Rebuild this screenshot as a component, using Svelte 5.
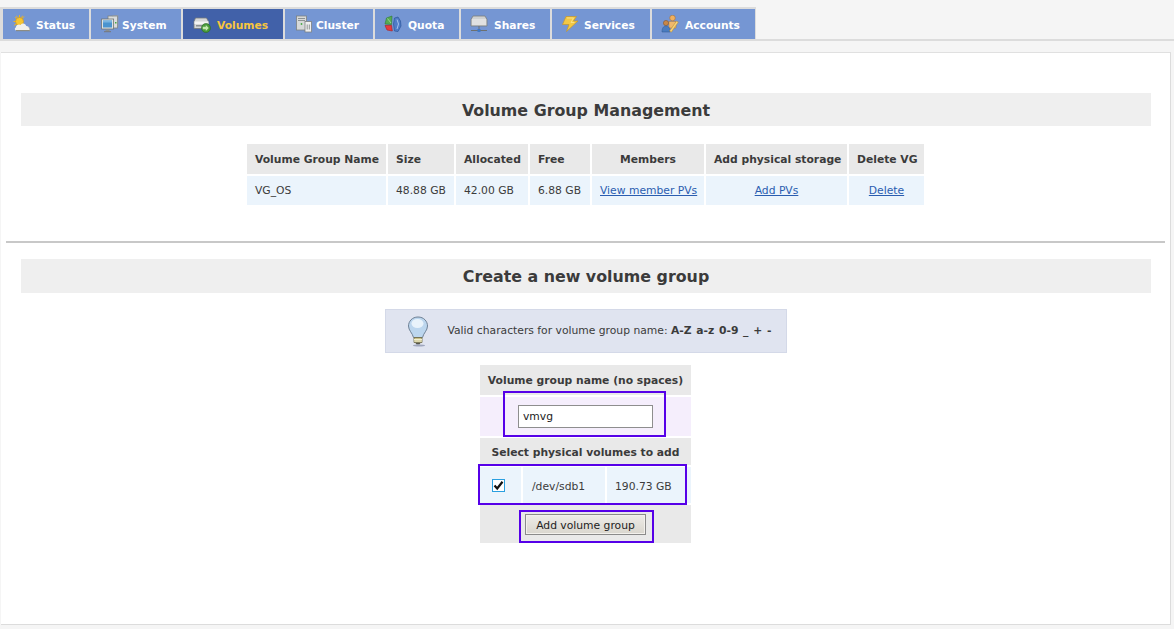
<script>
  const tabs = [
    { label: 'Status', icon: 'status' },
    { label: 'System', icon: 'system' },
    { label: 'Volumes', icon: 'volumes', active: true },
    { label: 'Cluster', icon: 'cluster' },
    { label: 'Quota', icon: 'quota' },
    { label: 'Shares', icon: 'shares' },
    { label: 'Services', icon: 'services' },
    { label: 'Accounts', icon: 'accounts' }
  ];
  const heads = ['Volume Group Name', 'Size', 'Allocated', 'Free', 'Members', 'Add physical storage', 'Delete VG'];
</script>

{#snippet icon(name)}
  <svg class="ico" viewBox="0 0 18 18" aria-hidden="true">
    {#if name === 'status'}
      <path d="M6.500 0v2.500M.5 6.500H3M2 2l1.800 1.800M11 1.500 9.500 3.300M1 10.500l2-1.300M9.500 0.800l-.8 2M3.500.8l.8 2" stroke="#eeb51f" stroke-width="1" />
      <circle cx="6.500" cy="6.500" r="4" fill="#f5c531" stroke="#d59a18" stroke-width=".7" />
      <path d="M3.500 15.500c-1.800 0-2.300-2.500-.6-3 .1-2.600 3-4 4.700-2.500.9-2.300 5.200-2 5.600 1 2.400-.3 4.400 2.800 3.600 4.500z" fill="#f1f0ea" />
      <path d="M3 15.600h14" stroke="#8c8c84" stroke-width="1.200" />
      <path d="M15.800 12.500c1 .8 1.200 2 .8 3" stroke="#a5a59c" fill="none" stroke-width=".8" />
    {:else if name === 'system'}
      <rect x="7" y="1" width="9.500" height="12" fill="#d9dcdc" stroke="#7e8383" stroke-width=".8" />
      <path d="M11 1 13 .5h4v11" fill="none" stroke="#9a9e9e" stroke-width=".6" />
      <rect x="14" y="7" width="1.500" height="1.500" fill="#49a846" />
      <rect x=".6" y="4" width="12" height="10" fill="#dfe3e3" stroke="#6e7474" stroke-width=".8" />
      <rect x="2" y="5.500" width="9" height="7" fill="#4a94cf" />
      <path d="M2 5.500h9v2H2z" fill="#79b4e0" />
      <path d="M4.500 14.500h4V16h-4z" fill="#8a8f8f" />
      <path d="M3 16.700h7" stroke="#777" />
    {:else if name === 'volumes'}
      <path d="M2.500 3h11l2 3.500v7H1v-7z" fill="#d5d7d7" stroke="#74797b" stroke-width=".8" />
      <rect x="1.500" y="6.500" width="14" height="2.500" fill="#f4f4f4" />
      <rect x="3" y="10" width="8" height="1.500" fill="#8c9092" />
      <circle cx="13" cy="13" r="4.500" fill="#4a9a3b" stroke="#2a6a25" stroke-width=".6" />
      <path d="M9.800 11.800h3V10l3 3-3 3v-1.800h-3z" fill="#c5eab0" />
    {:else if name === 'cluster'}
      <rect x="1.500" y="1" width="10" height="14" fill="#d7d9d9" stroke="#7d8282" stroke-width=".8" />
      <path d="M3 3.500h7M3 5.500h7" stroke="#8d9292" />
      <circle cx="6.500" cy="9" r=".9" fill="#49a846" />
      <rect x="10" y="6.500" width="6.500" height="10.500" fill="#f0f0f0" stroke="#7d8282" stroke-width=".8" />
      <path d="M12.200 9.500v5M14.300 9.500v5" stroke="#8d9292" />
    {:else if name === 'quota'}
      <path d="M8 1 2.500 3 1 9 7.500 9.500z" fill="#57ab52" stroke="#2f7a33" stroke-width=".6" />
      <path d="M3.500 3.500 7 8" stroke="#a9dba3" stroke-width=".8" />
      <path d="M1 10.500l6.500-.2.8 5.700-5.300-1z" fill="#e63b3e" stroke="#a81f22" stroke-width=".6" />
      <path d="M10.500 3 14 2l2.500 4 .5 5-3 5.500-3.500-.5-1-7z" fill="#4f7cc8" stroke="#244d91" stroke-width=".6" />
      <path d="M13 4.500 14.500 9 13 14" stroke="#a5c2ed" fill="none" />
    {:else if name === 'shares'}
      <path d="M3 1h12l2 3.500V11H1V4.500z" fill="#cfd1d1" stroke="#7a7e7e" stroke-width=".8" />
      <path d="M2 5h14M2 7h14M2 9h14" stroke="#f1f1f1" />
      <path d="M9 11v4M1 15.500h16" stroke="#6c7070" />
      <rect x="7.500" y="14" width="3" height="3" fill="#3f78c6" />
    {:else if name === 'services'}
      <path d="M5 1.500h10.500L12.500 6H17L5.500 16.500 8 9.500H1.500z" fill="#f3c844" stroke="#c5972a" stroke-width=".7" />
      <path d="M6 3h6.500L10 7.500h3.500" fill="none" stroke="#fbe694" stroke-width=".8" />
    {:else}
      <circle cx="11.500" cy="3" r="2.800" fill="#f0b05f" stroke="#a4692b" stroke-width=".5" />
      <path d="M8 6.500h7v6.500H8z" fill="#efb86c" stroke="#a4692b" stroke-width=".4" />
      <circle cx="5" cy="8" r="2.600" fill="#c88748" stroke="#7e4f20" stroke-width=".5" />
      <path d="M1 17c0-4 1.500-6 4-6s4 2 4 6z" fill="#4a7cc0" stroke="#2d568f" stroke-width=".5" />
      <path d="M8.500 16 15.500 6l1.800 1.200-7 10z" fill="#f3d27a" stroke="#b6842b" stroke-width=".5" />
    {/if}
  </svg>
{/snippet}

<div class="page">
  <nav class="tabbar">
    <ul class="tabs">
      {#each tabs as t}
        <li class="tab tab-{t.icon}" class:active={t.active}>
          {@render icon(t.icon)}
          <span>{t.label}</span>
        </li>
      {/each}
    </ul>
  </nav>

  <main class="panel">
    <h2 class="title first">Volume Group Management</h2>
    <table class="vg">
      <thead>
        <tr>
          {#each heads as h, i}
            <th class:left={i < 4} class="c{i}">{h}</th>
          {/each}
        </tr>
      </thead>
      <tbody>
        <tr>
          <td class="left">VG_OS</td>
          <td class="left">48.88 GB</td>
          <td class="left">42.00 GB</td>
          <td class="left">6.88 GB</td>
          <td><a href="#m">View member PVs</a></td>
          <td><a href="#a">Add PVs</a></td>
          <td><a href="#d">Delete</a></td>
        </tr>
      </tbody>
    </table>

    <hr class="rule" />

    <h2 class="title second">Create a new volume group</h2>

    <div class="note">
      <svg class="bulb" width="24" height="32" viewBox="0 0 24 32" aria-hidden="true">
        <path d="M12 2C6 2 2.500 6.500 2.500 11c0 4.500 4 7 5 11.500h9c1-4.500 5-7 5-11.500C21.500 6.500 18 2 12 2z" fill="#bcd6ee" stroke="#6f8196" stroke-width="1" />
        <ellipse cx="11.500" cy="8.500" rx="6" ry="4.500" fill="#e9f3fb" />
        <path d="M8 22.500h8v5H8z" fill="#c9c08a" stroke="#6d6a48" stroke-width=".8" />
        <path d="M8 24.500h8M8 26h8" stroke="#f1efcf" />
        <path d="M9.500 28h5l-1 1.500h-3z" fill="#55554a" />
        <ellipse cx="13" cy="30.500" rx="6" ry="1" fill="#9fa6bd" />
      </svg>
      <p>Valid characters for volume group name: <b>A-Z a-z 0-9 _ + -</b></p>
    </div>

    <div class="formwrap">
      <div class="form">
        <div class="fhead h1">Volume group name (no spaces)</div>
        <div class="frow">
          <input class="name" type="text" value="vmvg" />
        </div>
        <div class="fhead h2">Select physical volumes to add</div>
        <div class="pv">
          <div class="chk">
            <span class="box">
              <svg width="11" height="11" viewBox="0 0 11 11" aria-hidden="true"><path d="M1.500 5.500 4.200 8.500 9.500 1.800" fill="none" stroke="#111" stroke-width="2.200" /></svg>
            </span>
          </div>
          <div class="dev">/dev/sdb1</div>
          <div class="cap">190.73 GB</div>
        </div>
        <div class="fbtn"><button type="button">Add volume group</button></div>
        <span class="mark m1"></span>
        <span class="mark m2"></span>
        <span class="mark m3"></span>
      </div>
    </div>
  </main>
</div>

<style>
  :global(body) {
    margin: 0;
    background: #f5f5f5;
  }
  .page {
    height: 629px;
    overflow: hidden;
    font-family: "DejaVu Sans", Verdana, sans-serif;
    font-size: 10.750px;
    color: #3b3b3b;
  }
  .tabbar {
    padding-top: 7px;
    height: 32px;
    border-bottom: 2px solid #dcdcdc;
  }
  .tabs {
    list-style: none;
    margin: 0;
    padding: 2px 1px 0 3px;
    display: flex;
    gap: 2px;
    width: max-content;
    height: 32px;
    box-sizing: border-box;
    background: #dcdcdc;
  }
  .tab {
    height: 30px;
    box-sizing: border-box;
    background: #7596d3;
    color: #fff;
    font-weight: 700;
    font-size: 10.700px;
    display: flex;
    align-items: center;
  }
  .tab span { white-space: nowrap; position: relative; top: 1px; }
  .ico { width: 18px; height: 18px; flex: none; }
  .tab-status { width: 86px; padding-left: 10px; gap: 5px; }
  .tab-system { width: 90px; padding-left: 10px; gap: 3px; }
  .tab-volumes { width: 100px; padding-left: 10px; gap: 6px; }
  .tab-cluster { width: 88px; padding-left: 10px; gap: 3px; }
  .tab-quota { width: 84px; padding-left: 9px; gap: 6px; }
  .tab-shares { width: 89px; padding-left: 9px; gap: 6px; }
  .tab-services { width: 98px; padding-left: 9px; gap: 5px; }
  .tab-accounts { width: 103px; padding-left: 9px; gap: 6px; }
  .active { background: #4161a9; color: #f7c63e; }

  .panel {
    box-sizing: border-box;
    margin: 11px 3px 0 1px;
    height: 573px;
    background: #fff;
    border-top: 1px solid #e0e0e0;
    border-right: 1px solid #dcdcdc;
    border-bottom: 1px solid #dcdcdc;
    padding: 40px 0 0;
  }
  .title {
    margin: 0 19px 0 20px;
    height: 34px;
    line-height: 34px;
    background: #efefef;
    color: #3b3b3b;
    text-align: center;
    font-size: 15.850px;
    font-weight: 700;
  }
  .title.first { height: 33px; line-height: 35px; }
  .title.second { line-height: 36px; }

  .vg {
    margin: 16px auto 0;
    border-collapse: separate;
    border-spacing: 2px;
    table-layout: fixed;
    width: 681px;
  }
  .vg th {
    height: 30px;
    padding: 0 8px;
    background: #e9e9e9;
    font-weight: 700;
    white-space: nowrap;
    text-align: center;
    box-sizing: border-box;
  }
  .vg td {
    height: 29px;
    padding: 0 8px;
    background: #ebf4fc;
    text-align: center;
    white-space: nowrap;
    box-sizing: border-box;
  }
  .vg .left { text-align: left; }
  .vg th.c0 { width: 139px; }
  .vg th.c1 { width: 66px; }
  .vg th.c2 { width: 72px; }
  .vg th.c3 { width: 60px; }
  .vg th.c4 { width: 112px; }
  .vg th.c5 { width: 141px; }
  .vg th.c6 { width: 75px; }
  a { color: #2a5db0; }

  .rule {
    margin: 34px 5px 0 5px;
    height: 2px;
    border: 0;
    background: #c8c8c8;
  }
  .rule + .title { margin-top: 16px; }

  .note {
    box-sizing: border-box;
    width: 402px;
    height: 44px;
    margin: 16px auto 0;
    display: flex;
    align-items: center;
    gap: 18px;
    padding-left: 20px;
    background: #e0e4f0;
    border: 1px solid #d4d9e8;
  }
  .note p { margin: 0 0 2px; white-space: nowrap; }
  .note b { word-spacing: 1px; }
  .bulb { flex: none; }

  .formwrap { display: flex; justify-content: center; margin-top: 12px; }
  .form {
    width: 211px;
    position: relative;
    display: flex;
    flex-direction: column;
    gap: 2px;
  }
  .fhead {
    background: #e9e9e9;
    font-weight: 700;
    text-align: center;
    white-space: nowrap;
  }
  .h1 { height: 30px; line-height: 32px; }
  .h2 { height: 27px; line-height: 30px; }
  .frow {
    height: 39px;
    background: #f5eefc;
    display: flex;
    align-items: center;
    justify-content: center;
  }
  .name {
    box-sizing: border-box;
    width: 135px;
    height: 23px;
    border: 1px solid #8e8e8e;
    padding: 0 4px;
    font: 10.750px "DejaVu Sans", Verdana, sans-serif;
    color: #222;
    background: #fff;
    margin: 0;
  }
  .pv {
    height: 36px;
    display: grid;
    grid-template-columns: 41px 82px 84px;
    gap: 2px;
  }
  .pv > div {
    background: #ebf4fc;
    display: flex;
    align-items: center;
  }
  .chk { justify-content: center; padding-right: 4px; box-sizing: border-box; }
  .box {
    box-sizing: border-box;
    width: 13px;
    height: 13px;
    background: #fff;
    border: 1px solid #2a9fe0;
    display: flex;
    align-items: center;
    justify-content: center;
  }
  .dev { padding: 3px 0 0 9px; }
  .cap { padding: 3px 0 0 8px; }
  .fbtn {
    height: 38px;
    background: #e9e9e9;
    display: flex;
    align-items: center;
    justify-content: center;
  }
  button {
    box-sizing: border-box;
    width: 121px;
    height: 21px;
    padding: 2px 0 0;
    font: 10.750px "DejaVu Sans", Verdana, sans-serif;
    color: #222;
    background: linear-gradient(#eeece8, #d9d6ce);
    border: 1px solid #8a8a8a;
    box-shadow: inset 0 0 0 1px #f3f1ed;
  }
  .mark {
    position: absolute;
    box-sizing: border-box;
    border: 2px solid #5600e8;
    pointer-events: none;
  }
  .m1 { left: 23px; top: 26px; width: 163px; height: 46px; }
  .m2 { left: -2px; top: 99px; width: 209px; height: 41px; }
  .m3 { left: 39px; top: 145px; width: 135px; height: 33px; }
</style>
